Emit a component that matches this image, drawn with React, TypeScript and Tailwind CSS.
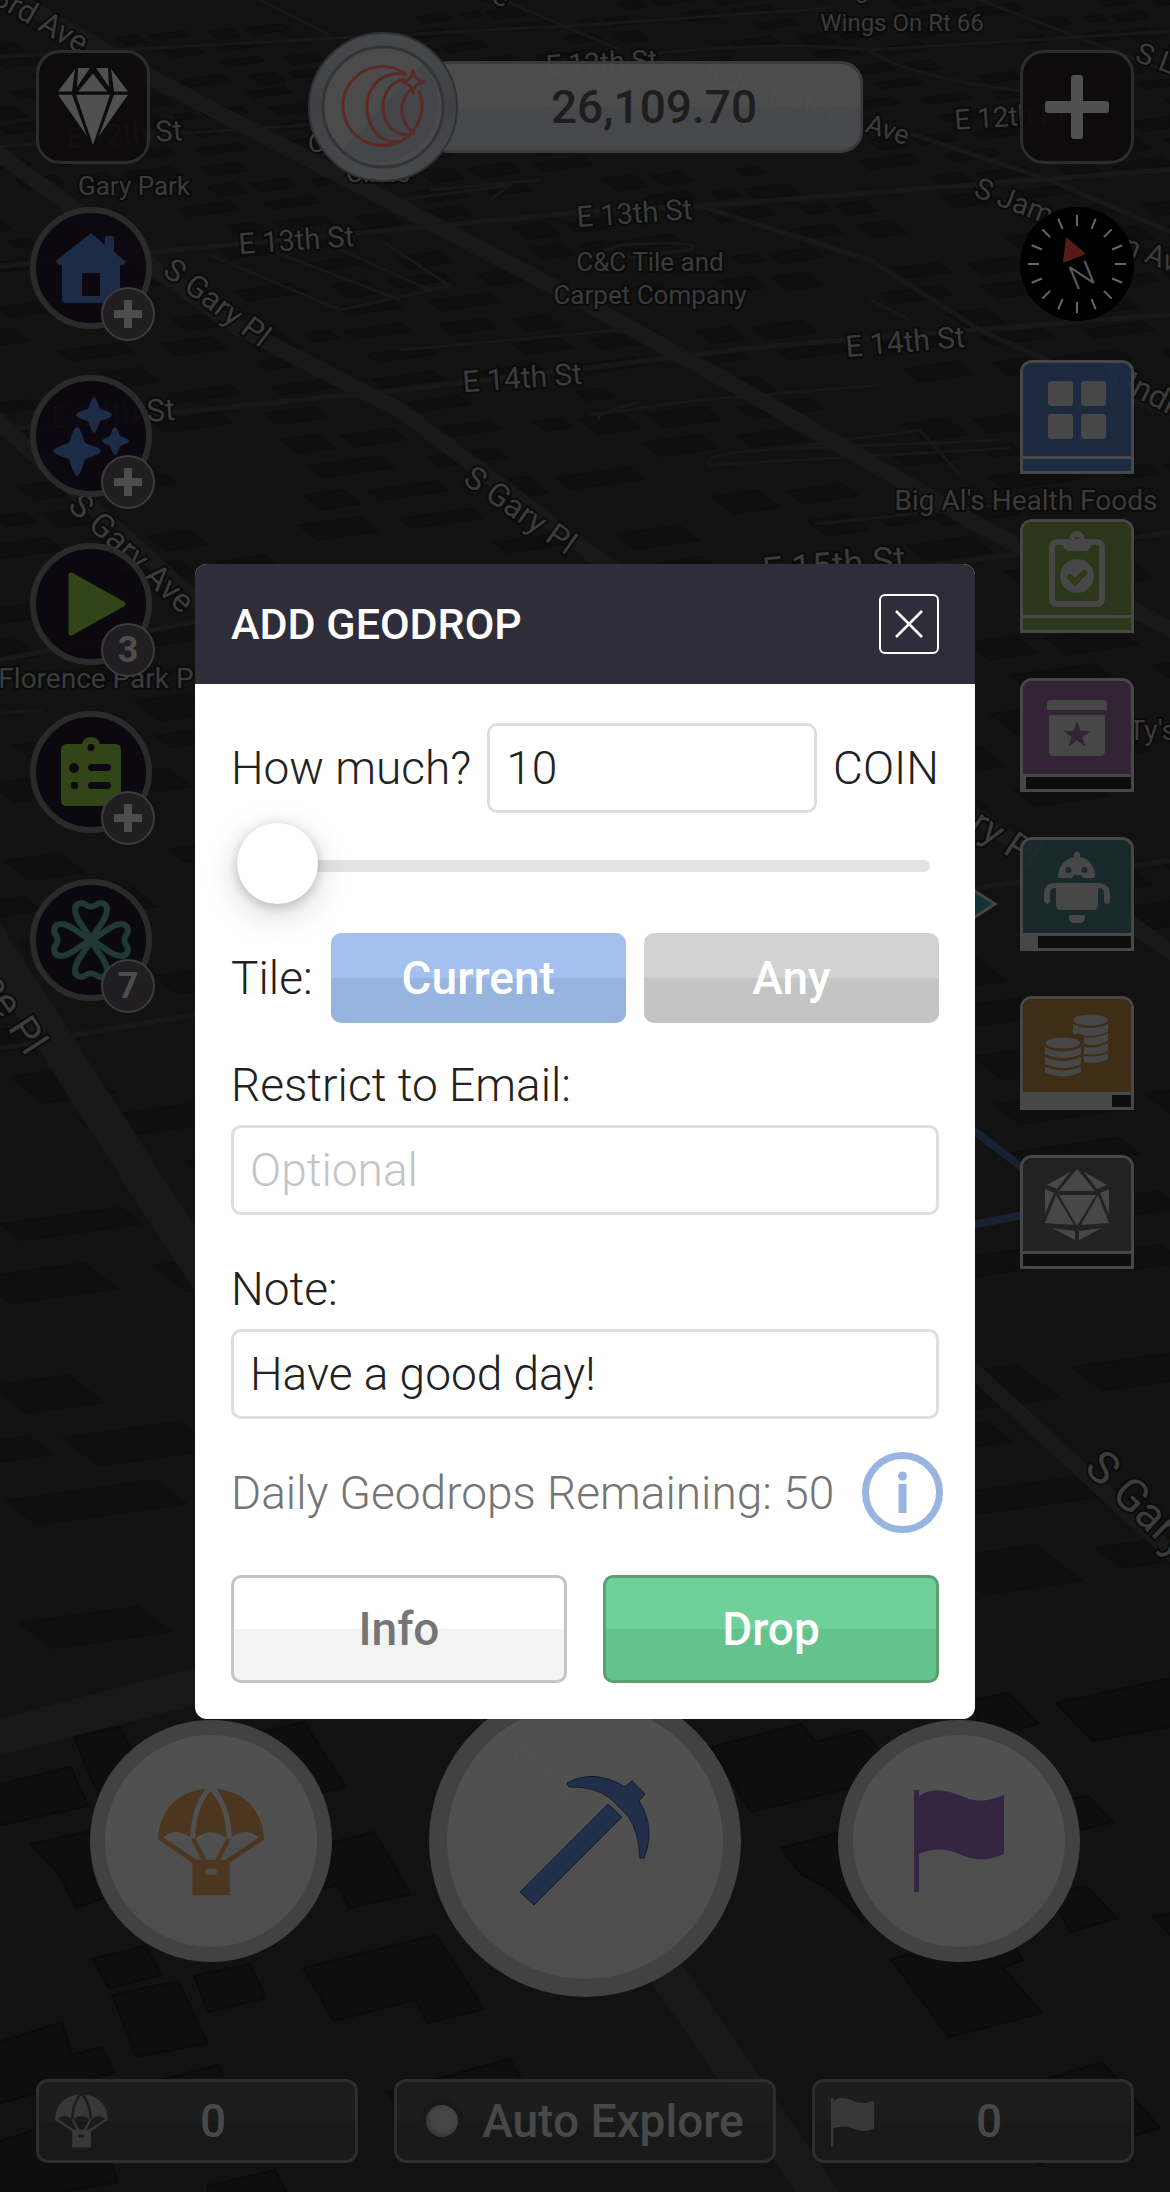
import React, { useState } from 'react'

type Label = { text: string; x: number; y: number; size: number; rotate?: number }

const labels: Label[] = [
  { text: '23rd Ave', x: 28, y: 24, size: 31, rotate: 30 },
  { text: 'S Gary Ave', x: 440, y: -16, size: 29, rotate: 20 },
  { text: 'E 12th St', x: 125, y: 144, size: 29, rotate: -4 },
  { text: 'Gary Park', x: 134, y: 195, size: 26 },
  { text: 'Alliance', x: 378, y: 122, size: 26 },
  { text: 'Chiropractic', x: 378, y: 152, size: 26 },
  { text: 'Clinic', x: 378, y: 182, size: 26 },
  { text: 'E 12th St', x: 602, y: 72, size: 28, rotate: -3 },
  { text: 'E 13th St', x: 297, y: 250, size: 29, rotate: -4 },
  { text: 'E 13th St', x: 635, y: 223, size: 29, rotate: -4 },
  { text: 'S Gary Pl', x: 211, y: 311, size: 31, rotate: 37 },
  { text: 'C&C Tile and', x: 650, y: 271, size: 26 },
  { text: 'Carpet Company', x: 650, y: 304, size: 26 },
  { text: 'E 14th St', x: 523, y: 388, size: 30, rotate: -4 },
  { text: 'S Gary Pl', x: 514, y: 519, size: 32, rotate: 35 },
  { text: 'S Jamestown Ave', x: 804, y: 112, size: 27, rotate: 18 },
  { text: "Angie's Fish &", x: 902, y: -2, size: 25 },
  { text: 'Wings On Rt 66', x: 902, y: 31, size: 24 },
  { text: 'E 12th Pl', x: 1010, y: 126, size: 28, rotate: -4 },
  { text: 'S Jamestown Ave', x: 1080, y: 237, size: 29, rotate: 21 },
  { text: 'S Lewis Ave', x: 1206, y: 87, size: 29, rotate: 20 },
  { text: 'E 14th St', x: 906, y: 352, size: 30, rotate: -5 },
  { text: 'S Indian Ave', x: 1176, y: 418, size: 32, rotate: 27 },
  { text: "Big Al's Health Foods", x: 1026, y: 510, size: 28 },
  { text: 'E 14th St', x: 114, y: 424, size: 31, rotate: -4 },
  { text: 'S Gary Ave', x: 124, y: 561, size: 33, rotate: 43 },
  { text: 'E 15th St', x: 835, y: 577, size: 36, rotate: -5 },
  { text: 'Florence Park P', x: 96, y: 688, size: 28 },
  { text: "Ty's Fine", x: 1182, y: 740, size: 28 },
  { text: 'S Gary Pl', x: 966, y: 828, size: 38, rotate: 34 },
  { text: 'Florence Pl', x: -28, y: 974, size: 40, rotate: 57 },
  { text: 'S Gary Ave', x: 1160, y: 1544, size: 45, rotate: 44 },
  { text: 'Florence Pl', x: 488, y: 1722, size: 44, rotate: 54 },
]

const wideRoads = [
  'M-20 -20 L160 82 L585 303 L770 405 L970 520 L1190 640',
  'M-20 140 L233 325 L400 410 L600 560 L975 815 L1190 965',
  'M-20 405 L193 598 L975 1372 L1190 1570',
]

const widestRoads = ['M-20 925 L150 1190 L675 1985 L830 2210', 'M-20 1742 L220 1680']

const midRoads = [
  'M-20 268 L585 212 L700 206 L1190 168',
  'M-20 432 L400 390 L770 346 L1190 313',
  'M-20 664 L193 622 L900 570 L1190 530',
  'M-20 1052 L220 1010',
  'M960 890 L1190 858',
  'M700 206 L870 260 L980 330 L1190 425',
  'M870 120 L1050 180 L1190 240',
]

const thinRoads = [
  'M-20 58 L300 40 L585 25 L830 8',
  'M-20 148 L260 128 L420 118',
  'M240 -10 L330 35',
  'M480 -10 L620 50 M640 55 Q770 40 870 50 L1190 30',
  'M870 52 Q920 80 1030 92',
  'M980 0 L1190 80',
  'M210 255 L340 310 L450 286 L385 243',
  'M270 250 L400 300 M330 245 L430 290',
  'M430 190 L540 180 M400 200 L510 185 L490 200',
  'M590 415 L700 400 L880 385 M600 420 Q590 415 640 402',
  'M710 465 L1010 448 M710 465 Q700 455 760 450 L1000 440',
  'M770 450 L920 430 L960 475 M815 524 L1000 505',
  'M870 300 L910 320 M0 713 L42 710',
  'M400 350 L620 330 M590 255 L620 245 Q710 240 690 250 L600 260',
]

// Building footprints close to the camera, the far ones come from farBlocks()
const nearBlocks = [
  '74,1737 119,1727 160,1800 105,1812',
  '263,1732 304,1722 346,1787 323,1792',
  '323,1845 374,1832 411,1894 349,1908 338,1885 323,1889',
  '92,1959 145,1946 162,1975 109,1988',
  '112,1995 178,1981 208,2043 136,2057',
  '194,1976 250,1964 266,1998 208,2012',
  '303,1968 436,1935 484,2009 427,2023 415,2000 334,2021',
  '-4,1785 71,1767 88,1806 -4,1826',
  '30,1844 95,1830 125,1890 76,1908 60,1875',
  '711,1747 801,1724 816,1742 862,1730 882,1752 854,1787 751,1812',
  '781,1848 838,1833 862,1920 830,1890 801,1874',
  '971,1700 1009,1693 1038,1724 985,1737',
  '1056,1703 1180,1676 1180,1725 1093,1741',
  '1060,1800 1088,1796 1113,1822 1060,1835',
  '1050,1893 1086,1886 1117,1918 1070,1932',
  '891,1959 1003,1930 1023,1960 1003,1968 1042,2013 949,2037',
  '1153,1917 1180,1911 1180,1945',
  '-4,2043 62,2022 72,2055 102,2047 115,2072 -4,2104',
  '-4,2142 100,2110 117,2182 20,2200 -4,2200',
  '160,2080 218,2065 250,2140 190,2150',
  '388,2092 510,2059 545,2125 425,2155',
  '207,2186 275,2170 290,2200 207,2200',
  '985,2098 1102,2062 1160,2128 1040,2164',
]

const farBlocks = () => {
  const blocks: string[] = []
  let row = 0
  for (let y = 6; y < 1600; row++) {
    const scale = 0.6 + y / 800
    let x = -40 + ((row * 37) % 60)
    for (let i = 0; x < 1190; i++) {
      const seed = (row * 31 + i * 17 + row * i * 7) % 11
      const w = (26 + seed * 4) * scale
      const h = (8 + (seed % 4) * 2) * scale
      if (seed % 3 !== 1) {
        const top = y - x * 0.07 + 40
        const rise = w * 0.14
        const lean = h * 1.3
        blocks.push(`${x},${top} ${x + w},${top - rise} ${x + w + lean},${top + h - rise} ${x + lean},${top + h}`)
      }
      x += w + (14 + seed * 3) * scale
    }
    y += 25 * scale
  }
  return blocks
}

const CityMap = () => (
  <svg
    className="absolute inset-0 h-full w-full"
    viewBox="0 0 1170 2192"
    preserveAspectRatio="xMidYMid slice"
    aria-hidden="true"
  >
    <rect width="1170" height="2192" fill="#121212" />
    <g fill="#0f0f0f" stroke="#0d0d0d" strokeWidth="1">
      {farBlocks().map((points, i) => <polygon key={i} points={points} />)}
    </g>
    <g fill="#0e0e0e" stroke="#0b0b0b" strokeWidth="2">
      {nearBlocks.map((points) => <polygon key={points} points={points} />)}
    </g>
    <g fill="none" stroke="#181818">
      {thinRoads.map((d) => <path key={d} d={d} strokeWidth="3" />)}
      {midRoads.map((d) => <path key={d} d={d} strokeWidth="5" />)}
      {wideRoads.map((d) => <path key={d} d={d} strokeWidth="16" />)}
      {widestRoads.map((d) => <path key={d} d={d} strokeWidth="36" />)}
    </g>
    <path d="M960 1120 L1072 1206 L960 1227" fill="none" stroke="#18212f" strokeWidth="8" />
    <path d="M970 888 L995 904 L970 920 Z" fill="#123437" stroke="#444" strokeWidth="3" />
    <g
      fill="#3b3b3b"
      stroke="#0b0b0b"
      strokeWidth="4"
      paintOrder="stroke"
      textAnchor="middle"
      className="font-['Roboto',sans-serif]"
    >
      {labels.map((l) => (
        <text key={`${l.text}-${l.x}-${l.y}`} fontSize={l.size} transform={`translate(${l.x} ${l.y}) rotate(${l.rotate ?? 0})`}>
          {l.text}
        </text>
      ))}
    </g>
  </svg>
)

const GemIcon = () => (
  <svg width="72" height="78" viewBox="0 0 72 70" preserveAspectRatio="none" fill="#505050">
    <path d="M18 1 L15 21 L1 21Z M21 0H33L20 17Z M36 5L50 21H21Z M51 0H39L52 17Z M54 1L57 21H71Z" />
    <path d="M1 24H15L30 61Z M19 24H53L36 69Z M57 24H71L42 61Z" />
  </svg>
)

const HouseIcon = () => (
  <svg width="70" height="70" viewBox="0 0 70 70" fill="#1d2c46">
    <path
      fillRule="evenodd"
      d="M35 0 L49 12 V5 Q49 3 51 3 H56 Q58 3 58 5 V19 L70 29 Q69 32 64 32 V66 Q64 70 60 70 H10 Q6 70 6 66 V32 Q1 32 0 28 Z M26 40 V63 H44 V40 Z"
    />
  </svg>
)

const SparklesIcon = () => (
  <svg width="80" height="82" viewBox="-40 -44 80 82" fill="#1d2c46">
    <path d="M3 -42 Q5 -42 9 -30 Q21 -27 21 -24 Q21 -21 9 -18 Q5 -6 3 -6 Q1 -6 -3 -18 Q-15 -21 -15 -24 Q-15 -27 -3 -30 Q1 -42 3 -42Z" />
    <path d="M-14 -12 Q-11 -12 -6 4 Q10 9 10 12 Q10 15 -6 20 Q-11 37 -14 37 Q-17 37 -22 20 Q-38 15 -38 12 Q-38 9 -22 4 Q-17 -12 -14 -12Z" />
    <path d="M24 -12 Q26 -12 29 -3 Q38 0 38 2 Q38 4 29 7 Q26 16 24 16 Q22 16 19 7 Q11 4 11 2 Q11 0 19 -3 Q22 -12 24 -12Z" />
  </svg>
)

const PlayIcon = () => (
  <svg width="58" height="64" viewBox="0 0 58 64" className="ml-3">
    <path d="M3 3 V61 L55 32Z" fill="#324518" stroke="#324518" strokeWidth="5" strokeLinejoin="round" />
  </svg>
)

const ListIcon = () => (
  <svg width="60" height="70" viewBox="0 0 60 70">
    <path
      fill="#324518"
      fillRule="evenodd"
      d="M6 7 H21 Q23 0 30 0 Q37 0 39 7 H54 Q60 7 60 13 V63 Q60 69 54 69 H6 Q0 69 0 63 V13 Q0 7 6 7Z M30 7 A3.5 3.5 0 1 0 30 14 A3.5 3.5 0 1 0 30 7Z"
    />
    <g fill="#0c0a10">
      <circle cx="13" cy="31" r="5" />
      <rect x="27" y="27" width="23" height="7" rx="3.5" />
      <rect x="10" y="45" width="7" height="7" rx="2" />
      <rect x="27" y="45" width="23" height="7" rx="3.5" />
    </g>
  </svg>
)

const cloverLeaf = 'M0 0 C-4 -10 -16 -20 -16 -30 C-16 -38 -8 -38 -5 -35 Q0 -32 5 -35 C8 -38 16 -38 16 -30 C16 -20 4 -10 0 0Z'

const CloverIcon = () => (
  <svg width="82" height="82" viewBox="-41 -41 82 82" fill="none" stroke="#203838" strokeWidth="6" strokeLinejoin="round">
    <path d={cloverLeaf} />
    <path d={cloverLeaf} transform="rotate(90)" />
    <path d={cloverLeaf} transform="rotate(180)" />
    <path d={cloverLeaf} transform="rotate(270)" />
  </svg>
)

const GridIcon = () => (
  <svg width="58" height="58" viewBox="0 0 58 58" fill="#474747">
    <rect width="25" height="25" rx="3" />
    <rect x="33" width="25" height="25" rx="3" />
    <rect y="33" width="25" height="25" rx="3" />
    <rect x="33" y="33" width="25" height="25" rx="3" />
  </svg>
)

const ClipboardCheckIcon = () => (
  <svg width="56" height="76" viewBox="0 0 56 76" fill="none">
    <rect x="3" y="11" width="50" height="62" rx="5" stroke="#474747" strokeWidth="6" />
    <path
      fill="#474747"
      fillRule="evenodd"
      d="M14 9 H20 Q21 0 28 0 Q35 0 36 9 H42 V13 Q42 20 36 20 H20 Q14 20 14 13Z M28 6 A3 3 0 1 0 28 12 A3 3 0 1 0 28 6Z"
    />
    <circle cx="28" cy="45" r="17" fill="#474747" />
    <path d="M21 46 L26 51 L35 42" stroke="#2d391b" strokeWidth="6" strokeLinecap="round" />
  </svg>
)

const RewardBoxIcon = () => (
  <svg width="60" height="56" viewBox="0 0 60 56" fill="#474747">
    <path d="M0 10 V4 Q0 0 4 0 H56 Q60 0 60 4 V10Z" />
    <path
      fillRule="evenodd"
      d="M2 15 H58 V51 Q58 56 53 56 H7 Q2 56 2 51Z M30 21 L26.500 31 H16.500 L24.500 37 L21.500 46.500 L30 40.500 L38.500 46.500 L35.500 37 L43.500 31 H33.500Z"
    />
  </svg>
)

const RobotIcon = () => (
  <svg width="66" height="72" viewBox="0 0 66 72">
    <path
      fill="#474747"
      fillRule="evenodd"
      d="M30 6 V3 Q33 -2 36 3 V6 C46 8 51 16 51 27 H39 L37 24 H30 L28 27 H14 C14 16 20 8 30 6Z M24.500 16 A3 3 0 1 0 24.500 22 A3 3 0 1 0 24.500 16Z M40.500 16 A3 3 0 1 0 40.500 22 A3 3 0 1 0 40.500 16Z"
    />
    <path fill="#474747" d="M10 32 H56 Q66 34 66 42 V50 Q63 56 60 50 V42 Q60 37 54 37 V54 Q54 59 49 59 H17 Q12 59 12 54 V37 Q6 37 6 42 V50 Q3 56 0 50 V42 Q0 33 10 32Z" />
    <path fill="#474747" d="M25 64 H41 V66 Q41 72 35 72 H31 Q25 72 25 66Z" />
  </svg>
)

const CoinsIcon = () => (
  <svg width="64" height="64" viewBox="0 0 64 64" fill="#474747">
    <ellipse cx="45.500" cy="6" rx="17" ry="5.500" />
    <path d="M28 10 Q45 18 63 10 V18 Q50 24 37 21 Q34 19 28 20Z M39 23 Q52 25 63 19 V27 Q52 33 39 30Z M39 33 Q52 35 63 29 V37 Q52 42 39 40Z M39 42 Q52 44 63 39 V45 Q52 51 39 48Z" />
    <ellipse cx="18" cy="29" rx="17" ry="5.500" />
    <path d="M0 33 Q18 42 36 33 V40 Q18 48 0 40Z M0 43 Q18 51 36 43 V50 Q18 58 0 50Z M0 53 Q18 60 36 53 V58 Q18 67 0 58Z" />
  </svg>
)

const DiceIcon = () => (
  <svg width="64" height="72" viewBox="0 0 64 72" fill="#474747">
    <path d="M32 0 L50 22 H14Z M25 3 L12 20 L2 16Z M39 3 L52 20 L62 16Z M0 20 L9 24 L0 45Z M64 20 L55 24 L64 45Z" />
    <path d="M14 26 H51 L32 57Z M11 26 L29 56 L0 54Z M53 26 L64 54 L36 56Z M7 59 L30 62 V71Z M57 59 L34 62 V71Z" />
  </svg>
)

const ParachuteIcon = ({ className }: { className: string }) => (
  <svg viewBox="0 0 105 106" className={className} fill="currentColor">
    <path d="M47 1 C20 3 1 22 0 51 L34 74 V106 H71 V74 L105 51 C104 22 85 3 58 1 C68 14 73 32 73 50 H68 C68 32 63 14 52 3 C42 14 37 32 37 50 H32 C32 32 37 14 47 1Z M5 49 Q18 38 32 49 L43 71 H38Z M37 50 Q52 37 68 50 L57 71 H48Z M100 49 Q87 38 73 49 L62 71 H67Z M48 80 H57 Q60 83 57 86 H48 Q45 83 48 80Z" fillRule="evenodd" />
  </svg>
)

const PickaxeIcon = () => (
  <svg width="130" height="130" viewBox="0 0 130 130" fill="#212f4a" stroke="#151b28" strokeWidth="1">
    <path d="M0 116 L14 129 L102 41 L88 28Z" />
    <path d="M47 7 Q74 -8 105 11 L112 5 L125 18 L119 25 Q136 52 124 82 H120 Q119 56 108 40 L90 22 Q74 10 49 11Z" />
  </svg>
)

const FlagIcon = ({ className }: { className: string }) => (
  <svg viewBox="0 0 90 102" className={className} fill="currentColor">
    <path d="M0 0 H5 V6 C20 -4 34 1 45 5 C62 13 72 12 90 5 V64 C74 71 62 71 45 64 C32 58 18 58 5 64 V102 H0Z" />
  </svg>
)

const CoinEmblem = () => (
  <svg width="150" height="150" viewBox="-75 -75 150 150" className="relative z-10 shrink-0">
    <defs>
      <linearGradient id="rim" x1="0" y1="0" x2="0" y2="1">
        <stop offset="0" stopColor="#46484c" />
        <stop offset="0.5" stopColor="#404144" />
        <stop offset="1" stopColor="#47494d" />
      </linearGradient>
    </defs>
    <circle r="74" fill="url(#rim)" stroke="#303133" strokeWidth="2" />
    <circle r="60" fill="#4b4b4c" stroke="#333436" strokeWidth="3" />
    <path d="M40 -43 L-40 43 A59 59 0 0 0 40 -43Z" fill="#444649" />
    <g fill="none" stroke="#5a2a27" strokeWidth="3" strokeLinejoin="round">
      <path d="M24 -32 A39.500 39.500 0 1 0 36 -16" />
      <path d="M22 -33 C-4 -36 -16 -18 -16 0 C-16 22 -2 36 16 35" />
      <path d="M22 -28 C6 -25 0 -12 0 0 C0 16 10 28 25 28" />
      <path d="M28 -18 C16 -6 15 12 30 26" />
      <path d="M30 -36 Q31 -27 41 -25 Q31 -23 30 -14 Q29 -23 20 -25 Q29 -27 30 -36Z" fill="#4b4b4c" />
    </g>
  </svg>
)

const Compass = () => (
  <svg width="114" height="114" viewBox="-57 -57 114 114" role="img" aria-label="Compass">
    <circle r="57" fill="#000" />
    {Array.from({ length: 16 }, (_, i) => (
      <path key={i} d="M0 -49 V-38" stroke="#666" strokeWidth="2" transform={`rotate(${i * 22.5})`} />
    ))}
    <path d="M-11 -27 L9 -10 L-14 -1Z" fill="#581c18" />
    <text
      transform="translate(5 12) rotate(-22)"
      y="11"
      fontSize="34"
      textAnchor="middle"
      fill="#5c5c5c"
      className="font-['Roboto',sans-serif] font-light"
    >
      N
    </text>
  </svg>
)

const BadgePlus = () => (
  <svg width="28" height="28" viewBox="0 0 28 28" fill="#4d4d4d">
    <path d="M10 0H18V10H28V18H18V28H10V18H0V10H10Z" />
  </svg>
)

const quickActions = [
  { name: 'Home', icon: <HouseIcon />, badge: <BadgePlus /> },
  { name: 'Boosts', icon: <SparklesIcon />, badge: <BadgePlus /> },
  { name: 'Play', icon: <PlayIcon />, badge: '3' },
  { name: 'Tasks', icon: <ListIcon />, badge: <BadgePlus /> },
  { name: 'Luck', icon: <CloverIcon />, badge: '7' },
]

const tiles = [
  { name: 'Apps', icon: <GridIcon />, color: 'bg-[#1d2b42]/95', bar: 'bg-[#1d2b42]', fill: 'w-0' },
  { name: 'Surveys', icon: <ClipboardCheckIcon />, color: 'bg-[#2d391b]/95', bar: 'bg-[#2d391b]', fill: 'w-0' },
  { name: 'Rewards', icon: <RewardBoxIcon />, color: 'bg-[#352638]/95', bar: 'bg-[#0e0d0e]', fill: 'w-[3px]' },
  { name: 'Bot', icon: <RobotIcon />, color: 'bg-[#1a2b2d]/95', bar: 'bg-[#0e0d0e]', fill: 'w-[15px]' },
  { name: 'Coins', icon: <CoinsIcon />, color: 'bg-[#413018]/95', bar: 'bg-[#0e0d0e]', fill: 'w-[89px]' },
  { name: 'Dice', icon: <DiceIcon />, color: 'bg-[#242424]/95', bar: 'bg-[#0e0d0e]', fill: 'w-0' },
]

const Header = () => (
  <header className="flex items-center justify-between px-9 pt-8">
    <button
      aria-label="Gems"
      className="flex size-[114px] items-center justify-center rounded-3xl border-[3px] border-[#2c2c2c] bg-[#0d0b0c]/90"
    >
      <GemIcon />
    </button>
    <div className="flex items-center">
      <CoinEmblem />
      <div
        className="-ml-8 flex h-[92px] w-[437px] items-center justify-center rounded-[22px] border-[3px] border-[#3a3a3b]
                   bg-linear-to-b from-[#4f4f4f]/95 from-50% to-[#4a4b4e]/95 to-50% pl-5 text-[46px] font-medium text-[#1e1e1e]"
      >
        26,109.70
      </div>
    </div>
    <button
      aria-label="Add"
      className="flex size-[114px] items-center justify-center rounded-3xl border-[3px] border-[#2c2c2c] bg-[#0d0b0c]/90"
    >
      <svg width="64" height="64" viewBox="0 0 64 64" fill="#505050">
        <rect x="26" width="12" height="64" rx="3" />
        <rect y="26" width="64" height="12" rx="3" />
      </svg>
    </button>
  </header>
)

const GeodropDialog = () => {
  const [amount, setAmount] = useState(10)
  const [tile, setTile] = useState('Current')
  const [email, setEmail] = useState('')
  const [note, setNote] = useState('Have a good day!')

  const field = 'h-[90px] w-full min-w-0 rounded-[10px] border-[3px] border-[#dedede] bg-white px-4 outline-none placeholder:text-[#c4c4c6]'

  return (
    <div className="absolute inset-0 z-20 flex items-start justify-center pt-[564px]">
      <div
        role="dialog"
        aria-labelledby="geodrop-title"
        className="w-2/3 overflow-hidden rounded-xl bg-white text-[46px] leading-[60px] font-light text-[#222]"
      >
        <div className="flex h-[120px] items-center justify-between bg-[#302d3a] px-9">
          <h2 id="geodrop-title" className="text-[43px] font-medium text-white">ADD GEODROP</h2>
          <button aria-label="Close" className="flex size-[60px] items-center justify-center rounded-md border-2 border-white">
            <svg width="28" height="28" viewBox="0 0 28 28" stroke="#fff" strokeWidth="2.500">
              <path d="M1 1L27 27M27 1L1 27" />
            </svg>
          </button>
        </div>

        <form className="px-9 pt-[39px] pb-9" onSubmit={(e) => e.preventDefault()}>
          <div className="flex items-center gap-4">
            <label htmlFor="amount" className="shrink-0">How much?</label>
            <input
              id="amount"
              type="text"
              inputMode="numeric"
              value={amount}
              onChange={(e) => setAmount(Number(e.target.value) || 0)}
              className={field}
            />
            <span className="shrink-0">COIN</span>
          </div>

          <input
            type="range"
            aria-label="Coin amount"
            min={10}
            max={1000}
            value={amount}
            onChange={(e) => setAmount(Number(e.target.value))}
            className="mx-[6px] mt-3 block h-[82px] w-[693px] max-w-full appearance-none bg-transparent
                       [&::-webkit-slider-runnable-track]:h-3 [&::-webkit-slider-runnable-track]:rounded-full
                       [&::-webkit-slider-runnable-track]:bg-[#e3e3e5]
                       [&::-webkit-slider-thumb]:-mt-[37px] [&::-webkit-slider-thumb]:size-[81px]
                       [&::-webkit-slider-thumb]:appearance-none [&::-webkit-slider-thumb]:rounded-full
                       [&::-webkit-slider-thumb]:bg-white
                       [&::-webkit-slider-thumb]:shadow-[0_10px_36px_rgba(0,0,0,0.16),0_3px_12px_rgba(0,0,0,0.2)]"
          />

          <div className="mt-[26px] flex items-center gap-[18px]">
            <span className="shrink-0">Tile:</span>
            <button
              type="button"
              aria-pressed={tile === 'Current'}
              onClick={() => setTile('Current')}
              className="h-[90px] flex-1 rounded-[10px] bg-linear-to-b from-[#a3c0ee] from-50% to-[#97b4df] to-50% font-medium text-white"
            >
              Current
            </button>
            <button
              type="button"
              aria-pressed={tile === 'Any'}
              onClick={() => setTile('Any')}
              className="h-[90px] flex-1 rounded-[10px] bg-linear-to-b from-[#d2d2d2] from-50% to-[#c4c4c4] to-50% font-medium text-white"
            >
              Any
            </button>
          </div>

          <label htmlFor="email" className="mt-8 block">Restrict to Email:</label>
          <input
            id="email"
            type="email"
            placeholder="Optional"
            value={email}
            onChange={(e) => setEmail(e.target.value)}
            className={`mt-[10px] block ${field}`}
          />

          <label htmlFor="note" className="mt-11 block">Note:</label>
          <input
            id="note"
            type="text"
            value={note}
            onChange={(e) => setNote(e.target.value)}
            className={`mt-[10px] block ${field}`}
          />

          <div className="-mr-1 mt-[33px] flex items-center justify-between whitespace-nowrap text-[#757575]">
            <p>Daily Geodrops Remaining: 50</p>
            <button type="button" aria-label="About daily geodrops" className="shrink-0">
              <svg width="81" height="81" viewBox="0 0 81 81" className="block" fill="#98b5e1">
                <circle cx="40.500" cy="40.500" r="37" fill="none" stroke="#98b5e1" strokeWidth="7" />
                <circle cx="40.500" cy="24" r="4.500" />
                <rect x="36.500" y="32" width="8" height="29" />
              </svg>
            </button>
          </div>

          <div className="mt-[42px] grid grid-cols-2 gap-9">
            <button
              type="button"
              className="h-[108px] rounded-[10px] border-[3px] border-[#c4c4c4] bg-linear-to-b from-white from-50% to-[#f3f3f3] to-50%
                         font-medium text-[#757575]"
            >
              Info
            </button>
            <button
              type="submit"
              className="h-[108px] rounded-[10px] border-[3px] border-[#5b9f73] bg-linear-to-b from-[#6fd09a] from-50% to-[#64c28d] to-50%
                         font-medium text-white"
            >
              Drop
            </button>
          </div>
        </form>
      </div>
    </div>
  )
}

const roundButton = 'flex items-center justify-center rounded-full border-[#424242] bg-linear-to-b from-[#525252]/97 from-50% to-[#505050]/97 to-50% bg-origin-border'
const pill = 'relative flex h-[84px] items-center justify-center rounded-xl border-[3px] border-[#2d2d2d] bg-linear-to-b from-[#1e1e1e]/90 from-50% to-[#1a1a1a]/90 to-50%'

const App = () => (
  <div className="relative flex min-h-screen flex-col overflow-hidden bg-[#121212] font-['Roboto',sans-serif]">
    <CityMap />

    <div className="relative z-10 flex flex-1 flex-col">
      <Header />

      <div className="flex items-start justify-between pt-[25px] pr-9 pl-[30px]">
        <nav className="flex flex-col gap-[46px]">
          {quickActions.map((action) => (
            <button
              key={action.name}
              aria-label={action.name}
              className="relative flex size-[122px] items-center justify-center rounded-full border-[6px] border-[#2a2a2a] bg-[#0c0a10]/95"
            >
              {action.icon}
              <span
                className="absolute -right-[9px] -bottom-[18px] flex size-[54px] items-center justify-center rounded-full
                           border-2 border-[#3c3c3c] bg-[#201e20] text-[36px] leading-none font-bold text-[#4d4d4d]"
              >
                {action.badge}
              </span>
            </button>
          ))}
        </nav>

        <nav className="flex flex-col items-center">
          <Compass />
          <div className="mt-[39px] flex flex-col gap-[45px]">
            {tiles.map((item) => (
              <button
                key={item.name}
                aria-label={item.name}
                className="flex size-[114px] flex-col overflow-hidden rounded-t-xl border-[3px] border-[#474747]"
              >
                <span className={`flex w-full flex-1 items-center justify-center border-b-[3px] border-[#474747] ${item.color}`}>
                  {item.icon}
                </span>
                <span className={`block h-3 w-full ${item.bar}`}>
                  <span className={`block h-full bg-[#474747] ${item.fill}`} />
                </span>
              </button>
            ))}
          </div>
        </nav>
      </div>

      <div className="mt-auto flex items-center justify-between px-[90px]">
        <button aria-label="Geodrop" className={`size-[242px] border-[15px] ${roundButton}`}>
          <ParachuteIcon className="w-[106px] text-[#4c3620]" />
        </button>
        <button aria-label="Mine" className={`size-[312px] border-[18px] ${roundButton}`}>
          <PickaxeIcon />
        </button>
        <button aria-label="Flag" className={`size-[242px] border-[15px] ${roundButton}`}>
          <FlagIcon className="w-[90px] text-[#342540]" />
        </button>
      </div>

      <footer className="mt-[82px] flex gap-9 px-9 pb-[29px] text-[46px] font-medium text-[#484848]">
        <button className={`flex-1 ${pill}`}>
          <ParachuteIcon className="absolute left-4 w-[53px] text-[#383838]" />
          <span className="pl-8">0</span>
        </button>
        <button className={`w-[382px] gap-6 ${pill}`}>
          <span className="size-8 shrink-0 rounded-full bg-[#454545] shadow-[inset_2px_-2px_4px_#333,0_0_0_6px_#191919]" />
          <span className="whitespace-nowrap">Auto Explore</span>
        </button>
        <button className={`flex-1 ${pill}`}>
          <FlagIcon className="absolute top-4 left-4 w-[43px] text-[#383838]" />
          <span className="pl-8">0</span>
        </button>
      </footer>
    </div>

    <GeodropDialog />
  </div>
)

export default App
